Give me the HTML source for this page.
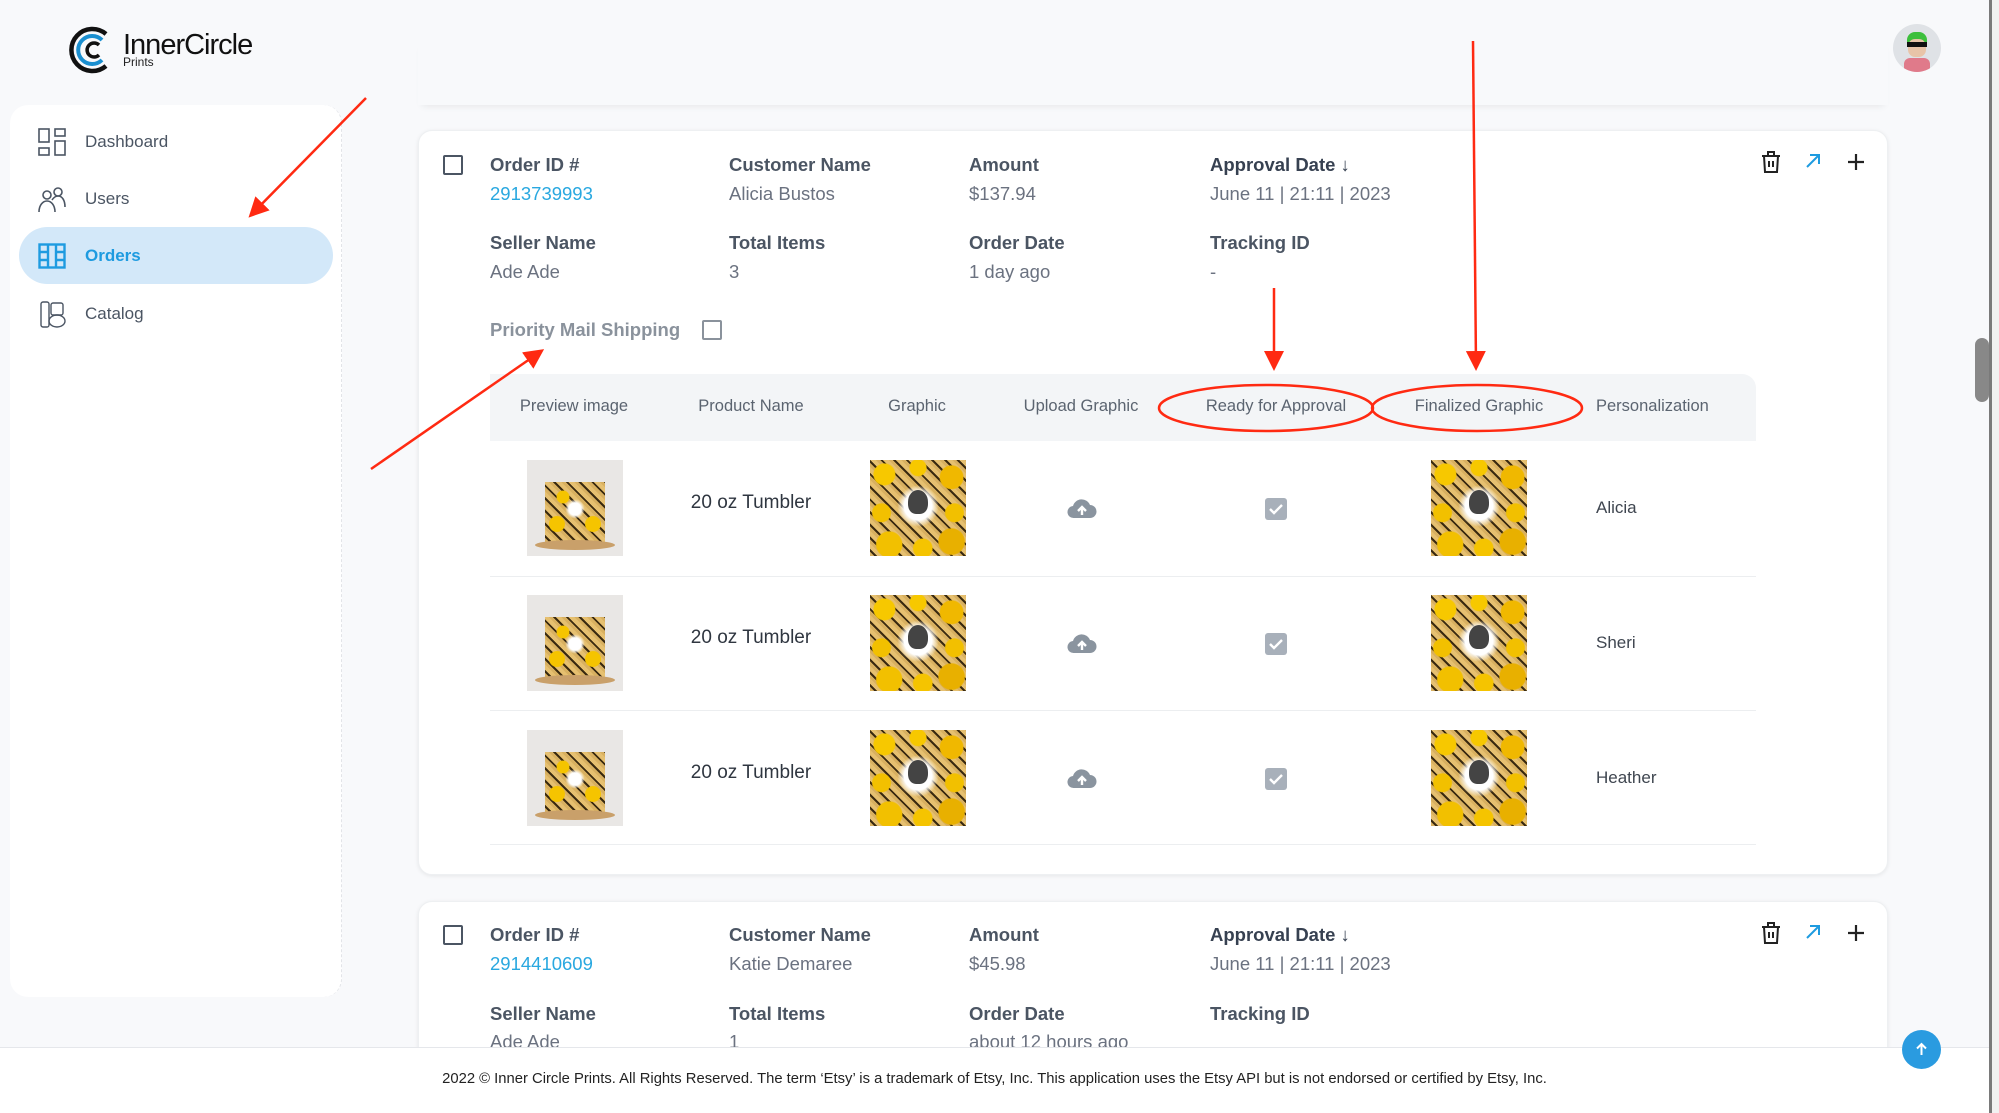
<!DOCTYPE html>
<html><head><meta charset="utf-8">
<style>
*{margin:0;padding:0;box-sizing:border-box}
html{overflow:hidden;width:1999px;height:1113px}
body{width:1999px;height:1113px;overflow:hidden;background:#f8f9fb;font-family:"Liberation Sans",sans-serif;position:relative;color:#374151}
.abs{position:absolute}
.side{left:10px;top:105px;width:332px;height:892px;background:#fff;border-radius:18px;border-right:1px dashed #e2e4e8}
.mi{position:absolute;left:85px;font-size:17px;color:#4b5563}
.card{background:#fff;border-radius:14px;box-shadow:0 1px 4px rgba(0,0,0,.08);border:1px solid #eef0f2}
.lbl{position:absolute;font-size:18.5px;font-weight:bold;color:#4b5563}
.val{position:absolute;font-size:18.5px;color:#6b7280}
.link{color:#29a8e0}
.cb{position:absolute;width:20px;height:20px;border:2px solid #4b5563;border-radius:2px}
.th{position:absolute;top:397px;font-size:16.5px;color:#5b6470;transform:translateX(-50%);white-space:nowrap}
.img{position:absolute;width:96px;height:96px;overflow:hidden}
.gr{background:radial-gradient(circle at 50% 48%,#fff 0 20%,transparent 30%),radial-gradient(circle at 15% 15%,#f7c800 0 9%,transparent 10%),radial-gradient(circle at 50% 8%,#f7c800 0 8%,transparent 9%),radial-gradient(circle at 85% 18%,#f0b800 0 10%,transparent 11%),radial-gradient(circle at 12% 55%,#f2c000 0 9%,transparent 10%),radial-gradient(circle at 88% 55%,#f2c000 0 9%,transparent 10%),radial-gradient(circle at 20% 88%,#f2c000 0 11%,transparent 12%),radial-gradient(circle at 55% 92%,#f5c400 0 9%,transparent 10%),radial-gradient(circle at 85% 85%,#e8b000 0 11%,transparent 12%),repeating-linear-gradient(45deg,#d8b060 0 3px,#3a2a10 3px 5px,#e6c070 5px 9px);}
.gr::after{content:"";position:absolute;left:38px;top:30px;width:20px;height:24px;background:#444;border-radius:50% 50% 40% 40%}
.pv{background:#e9e7e5}
.pv::before{content:"";position:absolute;left:18px;top:22px;width:60px;height:60px;background:radial-gradient(circle at 50% 45%,#fff 0 14%,transparent 22%),radial-gradient(circle at 20% 70%,#f5c400 0 12%,transparent 13%),radial-gradient(circle at 80% 70%,#f5c400 0 12%,transparent 13%),radial-gradient(circle at 30% 25%,#f5c400 0 10%,transparent 11%),repeating-linear-gradient(45deg,#d8b060 0 3px,#3a2a10 3px 5px,#e6c070 5px 9px)}
.pv::after{content:"";position:absolute;left:8px;top:80px;width:80px;height:10px;background:#c9a06a;border-radius:50%}
.pn{position:absolute;font-size:19px;color:#2f3640;transform:translateX(-50%)}
.row{position:absolute;left:490px;width:1266px;height:1px;background:#eceef0}
.chk{position:absolute;width:22px;height:22px;background:#a8b0ba;border-radius:3px}
.per{position:absolute;left:1596px;font-size:17px;color:#3f4650}
</style></head><body>
<svg class="abs" style="left:68px;top:24px" width="50" height="52" viewBox="0 0 50 52"><path d="M38 10A21 21 0 1 0 38 42" fill="none" stroke="#111" stroke-width="4.5"/><path d="M34 16A14 14 0 1 0 34 36" fill="none" stroke="#1a8fd0" stroke-width="4"/><path d="M31 21A7 7 0 1 0 31 31" fill="none" stroke="#111" stroke-width="3.5"/></svg>
<div class="abs" style="left:123px;top:29px;font-size:29px;color:#111;letter-spacing:-1px">InnerCircle</div>
<div class="abs" style="left:123px;top:55px;font-size:12px;color:#222">Prints</div>
<div class="abs" style="left:418px;top:40px;width:1470px;height:65px;background:#f8f9fb;box-shadow:0 5px 7px -4px rgba(0,0,0,.08)"></div>
<div class="abs" style="left:1893px;top:24px;width:48px;height:48px;border-radius:50%;background:#dfe2e6;overflow:hidden">
<div class="abs" style="left:14px;top:8px;width:20px;height:12px;background:#3cbf3c;border-radius:8px 8px 0 0"></div>
<div class="abs" style="left:15px;top:15px;width:18px;height:18px;background:#e8c4a8;border-radius:40%"></div>
<div class="abs" style="left:14px;top:18px;width:20px;height:5px;background:#111"></div>
<div class="abs" style="left:11px;top:34px;width:26px;height:16px;background:#e07a8a;border-radius:6px 6px 0 0"></div></div>
<div class="abs side"></div>
<svg class="abs" style="left:38px;top:128px" width="28" height="28" viewBox="0 0 28 28" fill="none" stroke="#4b5563" stroke-width="1.6"><rect x="1" y="1" width="10" height="13"/><rect x="17" y="1" width="10" height="7"/><rect x="1" y="20" width="10" height="7"/><rect x="17" y="13" width="10" height="14"/></svg>
<div class="mi" style="top:132px">Dashboard</div>
<svg class="abs" style="left:38px;top:186px" width="28" height="28" viewBox="0 0 28 28" fill="none" stroke="#4b5563" stroke-width="1.6"><circle cx="9" cy="9" r="4"/><circle cx="20" cy="6" r="4"/><path d="M1 26c0-7 4-11 8-11s8 4 8 11M14 14c2-3 4-4 6-4 4 0 7 4 7 11"/></svg>
<div class="mi" style="top:189px">Users</div>
<div class="abs" style="left:19px;top:227px;width:314px;height:57px;background:#d3e8f9;border-radius:29px"></div>
<svg class="abs" style="left:38px;top:243px" width="28" height="26" viewBox="0 0 28 26" fill="none" stroke="#1e9be0" stroke-width="2.4"><rect x="1.5" y="1.5" width="25" height="23"/><path d="M10 1.5v23M18 1.5v23M1.5 9h8M1.5 17h8M18 9h8.5M18 17h8.5"/></svg>
<div class="mi" style="top:246px;color:#1e9be0;font-weight:bold">Orders</div>
<svg class="abs" style="left:38px;top:299px" width="28" height="30" viewBox="0 0 28 30" fill="none" stroke="#4b5563" stroke-width="1.4"><rect x="3" y="3" width="8" height="25" rx="2"/><rect x="13" y="4" width="12" height="12" rx="2"/><ellipse cx="19" cy="22" rx="8" ry="6"/></svg>
<div class="mi" style="top:304px">Catalog</div>

<div class="abs card" style="left:418px;top:130px;width:1470px;height:745px"></div>
<div class="cb" style="left:443px;top:155px"></div>
<div class="lbl" style="left:490px;top:154px">Order ID #</div><div class="val link" style="left:490px;top:183px">2913739993</div>
<div class="lbl" style="left:729px;top:154px">Customer Name</div><div class="val" style="left:729px;top:183px">Alicia Bustos</div>
<div class="lbl" style="left:969px;top:154px">Amount</div><div class="val" style="left:969px;top:183px">$137.94</div>
<div class="lbl" style="left:1210px;top:154px;color:#374151">Approval Date ↓</div><div class="val" style="left:1210px;top:183px">June 11 | 21:11 | 2023</div>
<div class="lbl" style="left:490px;top:232px">Seller Name</div><div class="val" style="left:490px;top:261px">Ade Ade</div>
<div class="lbl" style="left:729px;top:232px">Total Items</div><div class="val" style="left:729px;top:261px">3</div>
<div class="lbl" style="left:969px;top:232px">Order Date</div><div class="val" style="left:969px;top:261px">1 day ago</div>
<div class="lbl" style="left:1210px;top:232px">Tracking ID</div><div class="val" style="left:1210px;top:261px">-</div>
<div class="lbl" style="left:490px;top:319px;color:#8a929c">Priority Mail Shipping</div>
<div class="cb" style="left:702px;top:320px;border-color:#8a929c"></div>
<svg class="abs" style="left:1760px;top:150px" width="22" height="24" viewBox="0 0 22 24" fill="none" stroke="#222" stroke-width="2"><path d="M2 6h18M8 6V2h6v4M4 6l1 16h12l1-16M9 11v6M13 11v6"/></svg>
<svg class="abs" style="left:1804px;top:152px" width="18" height="18" viewBox="0 0 18 18" fill="none" stroke="#1e9be0" stroke-width="2"><path d="M3 15L15 3M6 3h9v9"/></svg>
<svg class="abs" style="left:1847px;top:153px" width="18" height="18" viewBox="0 0 18 18" stroke="#222" stroke-width="2.2"><path d="M9 1v16M1 9h16"/></svg>
<div class="abs" style="left:490px;top:374px;width:1266px;height:67px;background:#f3f5f7;border-radius:0 14px 0 0"></div>
<div class="th" style="left:574px">Preview image</div>
<div class="th" style="left:751px">Product Name</div>
<div class="th" style="left:917px">Graphic</div>
<div class="th" style="left:1081px">Upload Graphic</div>
<div class="th" style="left:1276px">Ready for Approval</div>
<div class="th" style="left:1479px">Finalized Graphic</div>
<div class="th" style="left:1596px;transform:none">Personalization</div>

<div class="img pv" style="left:527px;top:460px"></div><div class="pn" style="left:751px;top:492px">20 oz Tumbler</div><div class="img gr" style="left:870px;top:460px"></div>
<svg class="abs" style="left:1067px;top:499px" width="30" height="20" viewBox="0 0 30 20"><path d="M7 19a6 6 0 0 1-1-12A9 9 0 0 1 23 6a6.5 6.5 0 0 1 0 13z" fill="#8a949f"/><path d="M15 16V9M11 12l4-4 4 4" stroke="#fff" stroke-width="2.4" fill="none"/></svg>
<div class="chk" style="left:1265px;top:498px"></div><svg class="abs" style="left:1265px;top:498px" width="22" height="22"><path d="M5 11l4 4 8-8" stroke="#fff" stroke-width="2.4" fill="none"/></svg>
<div class="img gr" style="left:1431px;top:460px"></div><div class="per" style="top:498px">Alicia</div>
<div class="row" style="top:576px"></div>

<div class="img pv" style="left:527px;top:595px"></div><div class="pn" style="left:751px;top:627px">20 oz Tumbler</div><div class="img gr" style="left:870px;top:595px"></div>
<svg class="abs" style="left:1067px;top:634px" width="30" height="20" viewBox="0 0 30 20"><path d="M7 19a6 6 0 0 1-1-12A9 9 0 0 1 23 6a6.5 6.5 0 0 1 0 13z" fill="#8a949f"/><path d="M15 16V9M11 12l4-4 4 4" stroke="#fff" stroke-width="2.4" fill="none"/></svg>
<div class="chk" style="left:1265px;top:633px"></div><svg class="abs" style="left:1265px;top:633px" width="22" height="22"><path d="M5 11l4 4 8-8" stroke="#fff" stroke-width="2.4" fill="none"/></svg>
<div class="img gr" style="left:1431px;top:595px"></div><div class="per" style="top:633px">Sheri</div>
<div class="row" style="top:710px"></div>

<div class="img pv" style="left:527px;top:730px"></div><div class="pn" style="left:751px;top:762px">20 oz Tumbler</div><div class="img gr" style="left:870px;top:730px"></div>
<svg class="abs" style="left:1067px;top:769px" width="30" height="20" viewBox="0 0 30 20"><path d="M7 19a6 6 0 0 1-1-12A9 9 0 0 1 23 6a6.5 6.5 0 0 1 0 13z" fill="#8a949f"/><path d="M15 16V9M11 12l4-4 4 4" stroke="#fff" stroke-width="2.4" fill="none"/></svg>
<div class="chk" style="left:1265px;top:768px"></div><svg class="abs" style="left:1265px;top:768px" width="22" height="22"><path d="M5 11l4 4 8-8" stroke="#fff" stroke-width="2.4" fill="none"/></svg>
<div class="img gr" style="left:1431px;top:730px"></div><div class="per" style="top:768px">Heather</div>
<div class="row" style="top:844px"></div>

<div class="abs card" style="left:418px;top:901px;width:1470px;height:200px"></div>
<div class="cb" style="left:443px;top:925px"></div>
<div class="lbl" style="left:490px;top:924px">Order ID #</div><div class="val link" style="left:490px;top:953px">2914410609</div>
<div class="lbl" style="left:729px;top:924px">Customer Name</div><div class="val" style="left:729px;top:953px">Katie Demaree</div>
<div class="lbl" style="left:969px;top:924px">Amount</div><div class="val" style="left:969px;top:953px">$45.98</div>
<div class="lbl" style="left:1210px;top:924px;color:#374151">Approval Date ↓</div><div class="val" style="left:1210px;top:953px">June 11 | 21:11 | 2023</div>
<div class="lbl" style="left:490px;top:1003px">Seller Name</div><div class="val" style="left:490px;top:1031px">Ade Ade</div>
<div class="lbl" style="left:729px;top:1003px">Total Items</div><div class="val" style="left:729px;top:1031px">1</div>
<div class="lbl" style="left:969px;top:1003px">Order Date</div><div class="val" style="left:969px;top:1031px">about 12 hours ago</div>
<div class="lbl" style="left:1210px;top:1003px">Tracking ID</div>
<svg class="abs" style="left:1760px;top:921px" width="22" height="24" viewBox="0 0 22 24" fill="none" stroke="#222" stroke-width="2"><path d="M2 6h18M8 6V2h6v4M4 6l1 16h12l1-16M9 11v6M13 11v6"/></svg>
<svg class="abs" style="left:1804px;top:923px" width="18" height="18" viewBox="0 0 18 18" fill="none" stroke="#1e9be0" stroke-width="2"><path d="M3 15L15 3M6 3h9v9"/></svg>
<svg class="abs" style="left:1847px;top:924px" width="18" height="18" viewBox="0 0 18 18" stroke="#222" stroke-width="2.2"><path d="M9 1v16M1 9h16"/></svg>

<div class="abs" style="left:0;top:1047px;width:1989px;height:66px;background:#fff;border-top:1px solid #e5e7eb"></div>
<div class="abs" style="left:0;top:1071px;width:1989px;text-align:center;font-size:14.8px;color:#222">2022 © Inner Circle Prints. All Rights Reserved. The term ‘Etsy’ is a trademark of Etsy, Inc. This application uses the Etsy API but is not endorsed or certified by Etsy, Inc.</div>
<div class="abs" style="left:1902px;top:1030px;width:39px;height:39px;border-radius:50%;background:#2a9be0"></div>
<svg class="abs" style="left:1912px;top:1040px" width="19" height="19" viewBox="0 0 19 19" fill="none" stroke="#fff" stroke-width="2"><path d="M9.5 15V4M5 8.5l4.5-4.5 4.5 4.5"/></svg>
<div class="abs" style="left:1989px;top:0;width:10px;height:1113px;background:#f1f1f1;border-left:3px solid #7a7a7a"></div>
<div class="abs" style="left:1975px;top:338px;width:14px;height:64px;background:#888;border-radius:7px"></div>

<svg class="abs" style="left:0;top:0" width="1999" height="1113" fill="none">
<defs><marker id="a" markerWidth="8" markerHeight="8" refX="6" refY="4" orient="auto"><path d="M0 0L8 4 0 8z" fill="#ff2a12"/></marker></defs>
<g stroke="#ff2a12" stroke-width="2.5">
<path d="M366 98L252 214" marker-end="url(#a)"/>
<path d="M371 469L540 352" marker-end="url(#a)"/>
<path d="M1274 288L1274 366" marker-end="url(#a)"/>
<path d="M1473 41L1476 366" marker-end="url(#a)"/>
<ellipse cx="1266" cy="408" rx="107" ry="23"/>
<ellipse cx="1477" cy="408" rx="105" ry="23"/>
</g></svg>
</body></html>
